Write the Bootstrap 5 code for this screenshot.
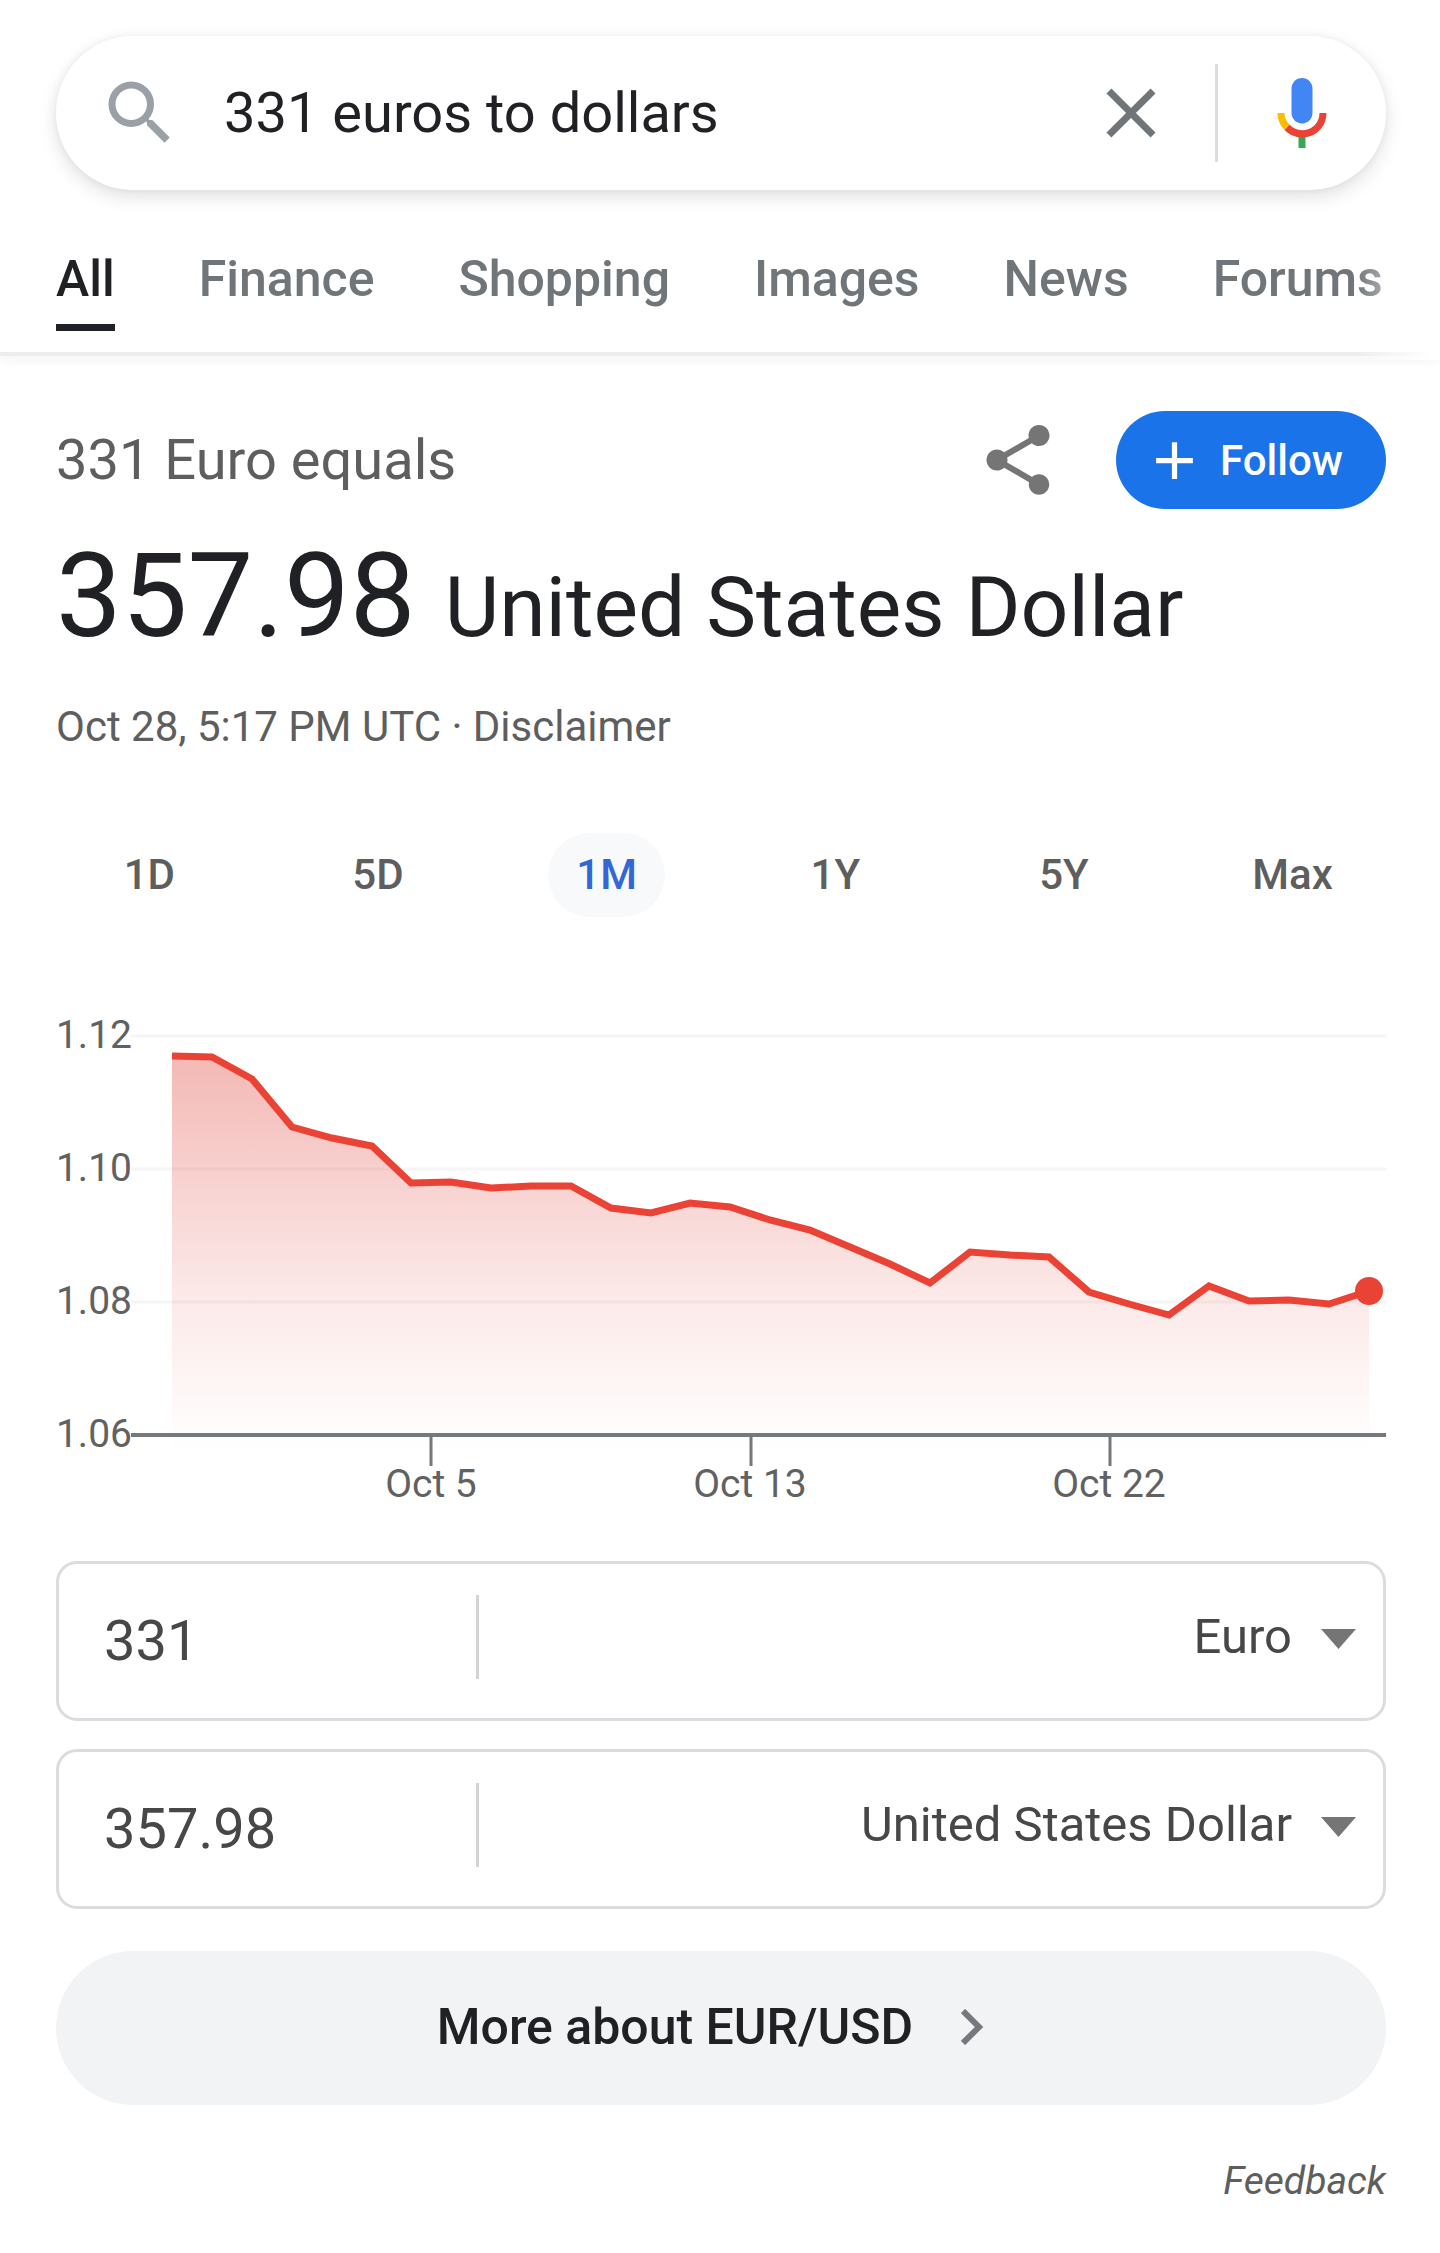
<!DOCTYPE html>
<html lang="en">
<head>
<meta charset="utf-8">
<meta name="viewport" content="width=device-width, initial-scale=1">
<title>331 euros to dollars</title>
<link rel="stylesheet" href="https://cdn.jsdelivr.net/npm/bootstrap@5.3.0/dist/css/bootstrap.min.css">
<style>
  body { font-family: Roboto, "Liberation Sans", sans-serif; color: #202124; background: #fff; }
  .page-x { padding-left: 56px; padding-right: 54px; }
  .icon-84 { width: 84px; height: 84px; display: block; }
  .plain-btn { border: 0; background: none; padding: 0; flex: none; }

  .top-bar { padding-top: 36px; padding-bottom: 21px; border-bottom: 4px solid #ebedef; box-shadow: 0 4px 10px rgba(32,33,36,.05); }
  .top-bar::after { content: ""; position: absolute; right: 0; top: 220px; bottom: -8px; width: 85px;
    background: linear-gradient(to right, rgba(255,255,255,0), #fff 90%); pointer-events: none; }
  .search-pill { height: 154px; padding: 0 42px; background: #fff; box-shadow: 0 7px 18px rgba(32,33,36,.13), 0 0 8px rgba(32,33,36,.05); }
  .search-text { font-size: 56px; line-height: 66px; border: 0; outline: 0; padding: 0; margin-left: 42px; color: #202124; background: none; min-width: 0; }
  .search-rule { width: 3px; height: 98px; background: #dadce0; margin: 0 42px; }
  .tab-strip { margin-top: 58px; gap: 84px; }
  .tab-item { font-size: 50px; line-height: 62px; font-weight: 500; color: #70757a; padding: 0 0 14px; border-bottom: 7px solid transparent; text-decoration: none; white-space: nowrap; }
  .tab-item.current { color: #202124; border-color: #202124; }

  .answer { padding-top: 55px; }
  .size-56 { font-size: 56px; line-height: 66px; }
  .grey { color: #5e5e5e; }
  .follow-btn { height: 98px; margin-left: 56px; padding: 0 43px 0 27px; gap: 14px; font-size: 42px; font-weight: 500; background: #1a73e8; color: #fff; border: 0; }
  .follow-btn svg { width: 63px; height: 63px; }
  .amount { margin: 27px 0 0; font-size: 117px; line-height: 120px; font-weight: 400; }
  .amount span { font-size: 84px; line-height: 84px; }
  .stamp { margin: 46px 0 0; font-size: 42px; line-height: 50px; }
  .ranges { margin: 81px -21px 0; }
  .range-btn { height: 84px; padding: 0 28px 2px; border: 0; border-radius: 42px; background: none; font-size: 42px; font-weight: 500; color: #5e5e5e; }
  .range-btn.current { background: #f8f9fb; color: #3367d6; }
  .rate-chart { margin-top: 99px; width: 100%; height: auto; display: block; overflow: visible; }
  .rate-chart text { font-size: 39px; fill: #616161; }

  .converter { margin-top: 51px; gap: 28px; }
  .money-box { height: 160px; border: 3px solid #dadce0; border-radius: 21px; padding: 0 27px 0 45px; }
  .money-box input { width: 372px; border: 0; outline: 0; padding: 0; background: none; font-size: 56px; line-height: 66px; color: #474747; }
  .money-rule { width: 3px; height: 84px; background: #d2d3d5; margin-bottom: 8px; }
  .money-box select { appearance: none; border: 0; outline: 0; background: none; padding: 0; margin-bottom: 8px; font-size: 49px; line-height: 60px; color: #474747; text-align: right; text-align-last: right; min-width: 0; }
  .caret { width: 35px; height: 20px; margin: 0 0 4px 29px; flex: none; }
  .more-btn { margin-top: 42px; height: 154px; padding-bottom: 2px; gap: 48px; background: #f1f3f4; color: #202124; font-size: 50px; font-weight: 500; text-decoration: none; }
  .more-btn svg { width: 44px; height: 36px; }
  .feedback { margin: 51px 0 47px; font-size: 39px; line-height: 50px; }
</style>
</head>
<body>
<header class="top-bar page-x position-relative">
  <form class="search-pill rounded-pill d-flex align-items-center" role="search">
    <svg class="icon-84 flex-shrink-0" viewBox="0 0 24 24" fill="#9aa0a6" aria-hidden="true"><path d="M15.5 14h-.79l-.28-.27A6.471 6.471 0 0 0 16 9.5 6.5 6.5 0 1 0 9.5 16c1.61 0 3.09-.59 4.23-1.57l.27.28v.79l5 4.99L20.49 19l-4.99-5zm-6 0C7.01 14 5 11.99 5 9.5S7.01 5 9.5 5 14 7.01 14 9.5 11.99 14 9.5 14z"/></svg>
    <input class="search-text flex-grow-1" type="text" value="331 euros to dollars" aria-label="Search">
    <button class="plain-btn" type="reset" aria-label="Clear"><svg class="icon-84" viewBox="0 0 24 24" fill="#70757a"><path d="M19 6.41L17.59 5 12 10.59 6.41 5 5 6.41 10.59 12 5 17.59 6.41 19 12 13.41 17.59 19 19 17.59 13.41 12z"/></svg></button>
    <span class="search-rule flex-shrink-0"></span>
    <button class="plain-btn" type="button" aria-label="Search by voice"><svg class="icon-84" viewBox="0 0 24 24"><path fill="#4285f4" d="M12 15c1.66 0 3-1.31 3-2.97V5.01C15 3.35 13.66 2 12 2S9 3.34 9 5.01v7.02C9 13.69 10.34 15 12 15z"/><path fill="#34a853" d="M11 18.08h2V22h-2z"/><path fill="#fbbc04" d="M7.05 16.87C5.78 15.54 5 14.04 5 12h2c0 1.45.56 2.42 1.47 3.38v.32l-1.15 1.18z"/><path fill="#ea4335" d="M12 16.93a4.97 5.25 0 0 1-3.54-1.55l-1.41 1.49C8.31 18.21 10.07 19 12 19c3.87 0 6.99-2.92 6.99-7H17c0 2.92-2.24 4.93-5 4.93z"/></svg></button>
  </form>
  <nav class="tab-strip d-flex" aria-label="Result types">
    <a class="tab-item current" href="#" aria-current="page">All</a>
    <a class="tab-item" href="#">Finance</a>
    <a class="tab-item" href="#">Shopping</a>
    <a class="tab-item" href="#">Images</a>
    <a class="tab-item" href="#">News</a>
    <a class="tab-item" href="#">Forums</a>
  </nav>
</header>

<main class="answer page-x">
  <div class="d-flex align-items-center">
    <div class="size-56 grey flex-grow-1">331 Euro equals</div>
    <button class="plain-btn" type="button" aria-label="Share"><svg class="icon-84" viewBox="0 0 24 24" fill="#757575"><path d="M18 16.08c-.76 0-1.44.3-1.96.77L8.91 12.7c.05-.23.09-.46.09-.7s-.04-.47-.09-.7l7.05-4.11c.54.5 1.25.81 2.04.81 1.66 0 3-1.34 3-3s-1.34-3-3-3-3 1.34-3 3c0 .24.04.47.09.7L8.04 9.81C7.5 9.31 6.79 9 6 9c-1.66 0-3 1.34-3 3s1.34 3 3 3c.79 0 1.5-.31 2.04-.81l7.12 4.16c-.05.21-.08.43-.08.65 0 1.61 1.31 2.92 2.92 2.92s2.92-1.31 2.92-2.92-1.31-2.92-2.92-2.92z"/></svg></button>
    <button class="follow-btn btn rounded-pill d-flex align-items-center" type="button"><svg viewBox="0 0 24 24" fill="#fff" aria-hidden="true"><path d="M19 13h-6v6h-2v-6H5v-2h6V5h2v6h6z"/></svg>Follow</button>
  </div>
  <h1 class="amount">357.98 <span>United States Dollar</span></h1>
  <p class="stamp grey">Oct 28, 5:17 PM UTC · <a class="grey text-decoration-none" href="#">Disclaimer</a></p>

  <div class="ranges row g-0 row-cols-6 text-center" role="group" aria-label="Time range">
    <div class="col"><button class="range-btn" type="button">1D</button></div>
    <div class="col"><button class="range-btn" type="button">5D</button></div>
    <div class="col"><button class="range-btn current" type="button" aria-pressed="true">1M</button></div>
    <div class="col"><button class="range-btn" type="button">1Y</button></div>
    <div class="col"><button class="range-btn" type="button">5Y</button></div>
    <div class="col"><button class="range-btn" type="button">Max</button></div>
  </div>

  <svg class="rate-chart" viewBox="56 1016 1330 494" role="img" aria-label="Euro to dollar rate over one month">
    <defs><linearGradient id="fade" gradientUnits="userSpaceOnUse" x1="0" y1="1056" x2="0" y2="1450"><stop offset="0" stop-color="#e0453c" stop-opacity=".38"/><stop offset=".6" stop-color="#e0453c" stop-opacity=".12"/><stop offset="1" stop-color="#ea4335" stop-opacity="0"/></linearGradient></defs>
    <path stroke="#f5f5f5" stroke-width="3" d="M131 1036H1386M131 1169H1386M131 1302H1386"/>
    <path fill="url(#fade)" d="M172 1056L212 1057 252 1079 292 1127 332 1138 372 1146 411 1183 451 1182 491 1188 531 1186 571 1186 611 1208 651 1213 690 1203 730 1207 770 1220 810 1230 850 1247 890 1264 930 1283 970 1252 1010 1255 1049 1257 1089 1292 1129 1304 1169 1315 1209 1286 1249 1301 1289 1300 1329 1304 1369 1291V1450H172z"/>
    <path fill="none" stroke="#ea4335" stroke-width="7" d="M172 1056L212 1057 252 1079 292 1127 332 1138 372 1146 411 1183 451 1182 491 1188 531 1186 571 1186 611 1208 651 1213 690 1203 730 1207 770 1220 810 1230 850 1247 890 1264 930 1283 970 1252 1010 1255 1049 1257 1089 1292 1129 1304 1169 1315 1209 1286 1249 1301 1289 1300 1329 1304 1369 1291"/>
    <circle cx="1369" cy="1291" r="14" fill="#ea4335"/>
    <path stroke="#75797d" stroke-width="4" d="M131 1435H1386"/>
    <path stroke="#75797d" stroke-width="3" d="M431 1436V1466M751 1436V1466M1110 1436V1466"/>
    <g text-anchor="end"><text x="132" y="1048">1.12</text><text x="132" y="1181">1.10</text><text x="132" y="1314">1.08</text><text x="132" y="1447">1.06</text></g>
    <g text-anchor="middle"><text x="431" y="1497">Oct 5</text><text x="750" y="1497">Oct 13</text><text x="1109" y="1497">Oct 22</text></g>
  </svg>

  <form class="converter d-flex flex-column">
    <div class="money-box d-flex align-items-center">
      <input type="text" inputmode="decimal" value="331" aria-label="Amount in euro">
      <span class="money-rule"></span>
      <select class="flex-grow-1" aria-label="From currency"><option>Euro</option></select>
      <svg class="caret" viewBox="0 0 35 20" fill="#757575" aria-hidden="true"><path d="M0 0H35L17.500 20z"/></svg>
    </div>
    <div class="money-box d-flex align-items-center">
      <input type="text" inputmode="decimal" value="357.98" aria-label="Amount in dollars">
      <span class="money-rule"></span>
      <select class="flex-grow-1" aria-label="To currency"><option>United States Dollar</option></select>
      <svg class="caret" viewBox="0 0 35 20" fill="#757575" aria-hidden="true"><path d="M0 0H35L17.500 20z"/></svg>
    </div>
  </form>

  <a class="more-btn rounded-pill d-flex align-items-center justify-content-center" href="#">More about EUR/USD
    <svg viewBox="0 0 44 36" fill="none" stroke="#75797d" stroke-width="6" aria-hidden="true"><path d="M2 2L18 18 2 34"/></svg></a>
  <div class="feedback text-end"><a class="grey fst-italic text-decoration-none" href="#">Feedback</a></div>
</main>
<script src="https://cdn.jsdelivr.net/npm/bootstrap@5.3.0/dist/js/bootstrap.bundle.min.js"></script>
</body>
</html>
